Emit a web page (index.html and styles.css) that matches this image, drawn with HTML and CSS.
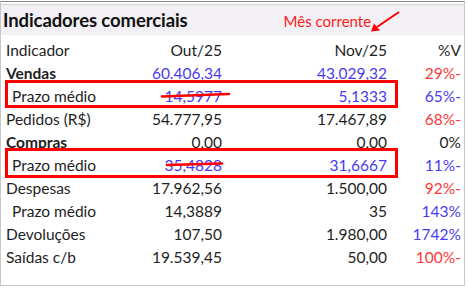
FILE: index.html
```html
<!DOCTYPE html>
<html lang="pt">
<head>
<meta charset="utf-8">
<link rel="stylesheet" href="styles.css">
</head>
<body>
<div class="panel">
  <div class="title-band">
    <span class="title">Indicadores comerciais</span>
    <span class="note">Mês corrente</span>
  </div>
  <div class="grid">
    <div class="row head"><span class="lbl">Indicador</span><span>Out/25</span><span>Nov/25</span><span>%V</span></div>
    <div class="row"><span class="lbl b">Vendas</span><span class="blue">60.406,34</span><span class="blue">43.029,32</span><span class="red">29%-</span></div>
    <div class="row"><span class="lbl sub">Prazo médio</span><span class="blue">14,5977</span><span class="blue">5,1333</span><span class="blue">65%-</span></div>
    <div class="row"><span class="lbl">Pedidos (R$)</span><span>54.777,95</span><span>17.467,89</span><span class="red">68%-</span></div>
    <div class="row"><span class="lbl b">Compras</span><span>0,00</span><span>0,00</span><span>0%</span></div>
    <div class="row"><span class="lbl sub">Prazo médio</span><span class="blue">35,4828</span><span class="blue">31,6667</span><span class="blue">11%-</span></div>
    <div class="row"><span class="lbl">Despesas</span><span>17.962,56</span><span>1.500,00</span><span class="red">92%-</span></div>
    <div class="row"><span class="lbl sub">Prazo médio</span><span>14,3889</span><span>35</span><span class="blue">143%</span></div>
    <div class="row"><span class="lbl">Devoluções</span><span>107,50</span><span>1.980,00</span><span class="blue">1742%</span></div>
    <div class="row"><span class="lbl">Saídas c/b</span><span>19.539,45</span><span>50,00</span><span class="red">100%-</span></div>
  </div>
  <div class="mark box1"></div>
  <div class="mark box2"></div>
  <svg class="ink" width="469" height="289" viewBox="0 0 469 289">
    <line x1="162" y1="96.5" x2="229" y2="94" stroke="#ff0000" stroke-width="2.5" stroke-linecap="round"/>
    <line x1="167" y1="165" x2="222" y2="163.5" stroke="#ff0000" stroke-width="2.5" stroke-linecap="round"/>
    <line x1="399" y1="12" x2="377" y2="27" stroke="#ff0000" stroke-width="2"/>
    <polygon points="371,31.5 374,23.5 380,30.5" fill="#ff0000"/>
  </svg>
</div>
</body>
</html>
```
FILE: styles.css
```css
html, body {
  margin: 0;
  padding: 0;
  background: #ffffff;
}
body {
  font-family: Lato, "Open Sans", sans-serif;
  color: #1e1e1e;
  width: 469px;
  height: 289px;
  overflow: hidden;
}
.panel {
  position: relative;
  width: 465px;
  height: 285px;
  border-top: 1px solid #8a8a8a;
  margin-top: 1px;
  border-left: 1px solid #c8c8c8;
  border-right: 1px solid #c8c8c8;
  border-bottom: 1px solid #c8c8c8;
  box-sizing: border-box;
  padding-top: 2px;
  background: #ffffff;
}
.title-band {
  height: 31px;
  background: #f3f0f5;
  display: flex;
  align-items: center;
  padding-left: 2px;
  border-top: 1px solid #d4d4d4;
  box-sizing: border-box;
}
.title {
  font-weight: 700;
  font-size: 18.5px;
  color: #111111;
  letter-spacing: -0.1px;
}
.note {
  margin-left: 96px;
  font-size: 15px;
  color: #ff1a1a;
  margin-top: 1px;
}
.grid {
  padding-top: 4px;
  display: flex;
  flex-direction: column;
}
.row {
  display: grid;
  grid-template-columns: 121px 95px 165px 74px;
  height: 23px;
  align-items: center;
  padding-left: 5px;
  font-size: 15.5px;
  line-height: 23px;
}
.row > span {
  text-align: right;
  white-space: nowrap;
}
.row > .lbl {
  text-align: left;
}
.lbl.b {
  font-weight: 700;
}
.lbl.sub {
  padding-left: 6px;
}
.blue {
  color: #4a3bf0;
}
.red {
  color: #ff3838;
}
.mark {
  position: absolute;
  border: 3px solid #ff0000;
  box-sizing: border-box;
}
.box1 {
  left: 4px;
  top: 78px;
  width: 393px;
  height: 28px;
}
.box2 {
  left: 4px;
  top: 146px;
  width: 393px;
  height: 30px;
}
.ink {
  position: absolute;
  left: -1px;
  top: -2px;
  pointer-events: none;
}
```
